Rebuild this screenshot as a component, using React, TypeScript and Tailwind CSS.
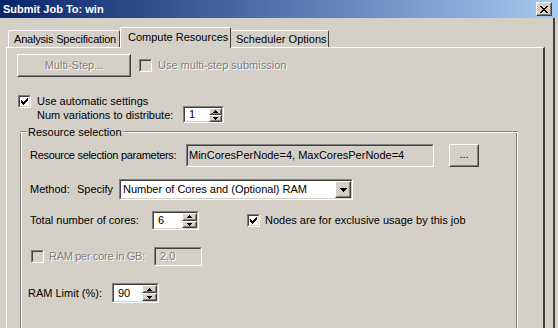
import React from "react";

// classic 3d borders
const sunkenOuter = "border border-t-[#808080] border-l-[#808080] border-b-white border-r-white";
const sunkenInner = "border border-t-[#404040] border-l-[#404040] border-b-[#d4d0c8] border-r-[#d4d0c8]";
const raisedOuter = "border border-t-white border-l-white border-b-[#404040] border-r-[#404040]";
const raisedInner = "border border-t-[#d4d0c8] border-l-[#d4d0c8] border-b-[#808080] border-r-[#808080]";
const disabledText = "text-[#808080] [text-shadow:1px_1px_0_#fff]";

function CheckBox({ checked = false, disabled = false }: { checked?: boolean; disabled?: boolean }) {
  return (
    <div className={`w-[13px] h-[13px] shrink-0 ${sunkenOuter}`}>
      <div
        className={`w-full h-full flex items-center justify-center ${sunkenInner} ${
          disabled ? "bg-[#d4d0c8]" : "bg-white"
        }`}
      >
        {checked && (
          <svg width="7" height="7" viewBox="0 0 7 7" shapeRendering="crispEdges">
            <path
              d="M6 0h1v1h-1z M5 1h2v1h-2z M0 2h1v1h-1z M4 2h3v1h-3z M0 3h2v1h-2z M3 3h3v1h-3z M0 4h5v1h-5z M1 5h3v1h-3z M2 6h1v1h-1z"
              fill="#000"
            />
          </svg>
        )}
      </div>
    </div>
  );
}

function Raised({ className = "", children }: { className?: string; children?: React.ReactNode }) {
  return (
    <div className={`${raisedOuter} bg-[#d4d0c8] ${className}`}>
      <div className={`w-full h-full flex items-center justify-center ${raisedInner}`}>{children}</div>
    </div>
  );
}

function Sunken({ className = "", inner = "", children }: { className?: string; inner?: string; children?: React.ReactNode }) {
  return (
    <div className={`${sunkenOuter} ${className}`}>
      <div className={`w-full h-full flex ${sunkenInner} ${inner}`}>{children}</div>
    </div>
  );
}

function UpArrow() {
  return (
    <svg width="5" height="3" viewBox="0 0 5 3" shapeRendering="crispEdges">
      <path d="M2 0h1v1h-1z M1 1h3v1h-3z M0 2h5v1h-5z" fill="#000" />
    </svg>
  );
}

function DownArrow({ big = false }: { big?: boolean }) {
  if (big)
    return (
      <svg width="7" height="4" viewBox="0 0 7 4" shapeRendering="crispEdges">
        <path d="M0 0h7v1h-7z M1 1h5v1h-5z M2 2h3v1h-3z M3 3h1v1h-1z" fill="#000" />
      </svg>
    );
  return (
    <svg width="5" height="3" viewBox="0 0 5 3" shapeRendering="crispEdges">
      <path d="M0 0h5v1h-5z M1 1h3v1h-3z M2 2h1v1h-1z" fill="#000" />
    </svg>
  );
}

function Spin({ value, className, btnW }: { value: string; className: string; btnW: string }) {
  return (
    <Sunken className={className} inner="bg-white">
      <div className="flex-1 flex items-center pl-[4px]">{value}</div>
      <div className={`flex flex-col ${btnW}`}>
        <Raised className="flex-1">
          <UpArrow />
        </Raised>
        <Raised className="flex-1">
          <DownArrow />
        </Raised>
      </div>
    </Sunken>
  );
}

function CloseButton() {
  return (
    <Raised className="w-[16px] h-[14px]">
      <svg width="8" height="7" viewBox="0 0 8 7" shapeRendering="crispEdges">
        <path
          d="M0 0h2v1h-2z M6 0h2v1h-2z M1 1h2v1h-2z M5 1h2v1h-2z M2 2h4v1h-4z M3 3h2v1h-2z M2 4h4v1h-4z M1 5h2v1h-2z M5 5h2v1h-2z M0 6h2v1h-2z M6 6h2v1h-2z"
          fill="#000"
        />
      </svg>
    </Raised>
  );
}

export default function App() {
  return (
    <div className="w-[558px] h-[328px] overflow-hidden whitespace-nowrap bg-[#d4d0c8] text-black text-[11px] leading-[13px] font-['Liberation_Sans',Arial,sans-serif]">
      {/* title bar */}
      <div className="h-[18px] flex items-center pl-[3px] pr-[6px] bg-linear-to-r from-[#0a246a] to-[#a6caf0]">
        <span className="flex-1 text-white font-bold">Submit Job To: win</span>
        <CloseButton />
      </div>

      <div className="flex h-[310px]">
        <div className="w-[553px] pl-[6px] pt-[9px]">
          {/* tabs */}
          <div className="flex items-end pl-[2px]">
            <div className="w-[112px] h-[17px] flex items-center pl-[5px] tracking-[-0.2px] border-t border-l border-white border-r border-r-[#404040] rounded-t-[2px]">
              Analysis Specification
            </div>
            <div className="relative z-10 -mb-px w-[111px] h-[21px] flex items-center pl-[7px] pb-[2px] bg-[#d4d0c8] border-t border-l border-white border-r border-r-[#404040] rounded-t-[2px]">
              Compute Resources
            </div>
            <div className="w-[98px] h-[17px] flex items-center pl-[5px] border-t border-r border-white border-r-[#404040] rounded-t-[2px]">
              Scheduler Options
            </div>
          </div>

          {/* tab panel */}
          <div className="w-[539px] h-[300px] border-t border-l border-white border-r-2 border-r-[#404040] pl-[10px]">
            <div className="mt-[6px] flex items-center">
              <Raised className="w-[114px] h-[23px]">
                <span className={disabledText}>Multi-Step...</span>
              </Raised>
              <div className="ml-[8px]">
                <CheckBox disabled />
              </div>
              <span className={`ml-[6px] ${disabledText}`}>Use multi-step submission</span>
            </div>

            <div className="mt-[18px] flex items-center h-[13px] pl-[1px]">
              <CheckBox checked />
              <span className="ml-[6px]">Use automatic settings</span>
            </div>

            <div className="-mt-[2px] flex items-center pl-[20px]">
              <span className="w-[146px] pt-[2px]">Num variations to distribute:</span>
              <Spin value="1" className="w-[41px] h-[17px]" btnW="w-[13px]" />
            </div>

            {/* group box */}
            <div className="mt-[2px] ml-[3px] w-[498px]">
              <div className="h-[14px] flex items-center">
                <div className="w-[7px] h-[2px] border-t border-t-[#808080] border-b border-b-white" />
                <span className="px-[1px]">Resource selection</span>
                <div className="flex-1 h-[2px] border-t border-t-[#808080] border-b border-b-white" />
              </div>
              <div className="h-[200px] border-l border-l-[#808080] border-r border-r-white shadow-[inset_1px_0_0_#fff,inset_-1px_0_0_#808080] pl-[9px] -mt-[6px] pt-[6px]">
                <div className="mt-[5px] flex items-center h-[23px]">
                  <span className="w-[156px] tracking-[-0.3px]">Resource selection parameters:</span>
                  <Sunken className="w-[248px] h-[23px]" inner="bg-[#d4d0c8] items-center pl-[1px]">
                    MinCoresPerNode=4, MaxCoresPerNode=4
                  </Sunken>
                  <Raised className="ml-[15px] w-[30px] h-[23px]">
                    <span className="pb-[2px]">...</span>
                  </Raised>
                </div>

                <div className="mt-[12px] flex items-center h-[21px]">
                  <span className="w-[47px]">Method:</span>
                  <span className="w-[42px]">Specify</span>
                  <Sunken className="w-[234px] h-[21px]" inner="bg-white items-center">
                    <span className="flex-1 pl-[2px]">Number of Cores and (Optional) RAM</span>
                    <Raised className="w-[16px] h-full">
                      <DownArrow big />
                    </Raised>
                  </Sunken>
                </div>

                <div className="mt-[11px] flex items-center h-[19px]">
                  <span className="w-[122px]">Total number of cores:</span>
                  <Spin value="6" className="w-[47px] h-[19px]" btnW="w-[15px]" />
                  <div className="ml-[48px]">
                    <CheckBox checked />
                  </div>
                  <span className="ml-[5px]">Nodes are for exclusive usage by this job</span>
                </div>

                <div className="mt-[17px] flex items-center h-[19px] pl-[1px]">
                  <CheckBox disabled />
                  <span className={`ml-[5px] w-[105px] tracking-[-0.3px] ${disabledText}`}>RAM per core in GB:</span>
                  <Sunken className="w-[48px] h-[19px]" inner="bg-[#d4d0c8] items-center pl-[4px]">
                    <span className={disabledText}>2.0</span>
                  </Sunken>
                </div>

                <div className="mt-[17px] flex items-center h-[20px] -ml-[2px]">
                  <span className="w-[84px]">RAM Limit (%):</span>
                  <Spin value="90" className="w-[47px] h-[20px]" btnW="w-[15px]" />
                </div>
              </div>
            </div>
          </div>
        </div>
        <div className="w-[2px] bg-[#404040]" />
      </div>
    </div>
  );
}
